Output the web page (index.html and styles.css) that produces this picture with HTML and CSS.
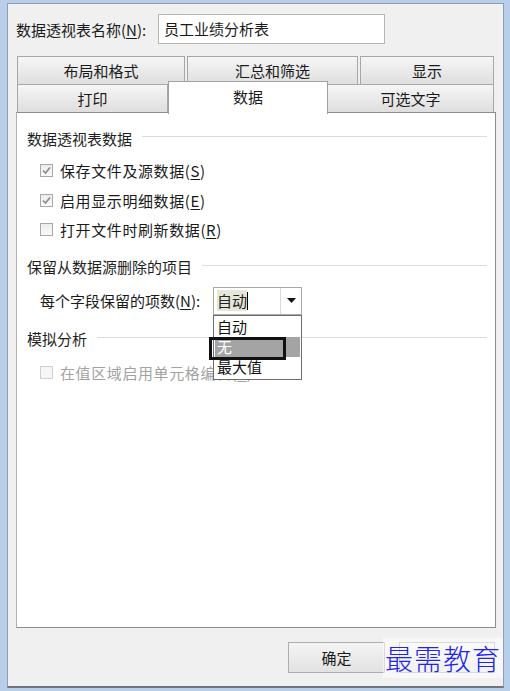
FILE: index.html
```html
<!DOCTYPE html>
<html>
<head>
<meta charset="utf-8">
<link rel="stylesheet" href="styles.css">
</head>
<body>
<div class="dialog">
  <div class="name-row">
    <label class="name-label">数据透视表名称(<u>N</u>):</label>
    <div class="name-input">员工业绩分析表</div>
  </div>

  <div class="tabs">
    <div class="tab-row row1">
      <div class="tab t-layout">布局和格式</div>
      <div class="tab t-sum">汇总和筛选</div>
      <div class="tab t-show">显示</div>
    </div>
    <div class="tab-row row2">
      <div class="tab t-print">打印</div>
      <div class="tab t-data active">数据</div>
      <div class="tab t-alt">可选文字</div>
    </div>
  </div>

  <div class="panel">
    <div class="group-head"><span>数据透视表数据</span><i></i></div>
    <div class="check-row"><span class="box checked"><svg viewBox="0 0 13 13" width="13" height="13"><path d="M3 6.5 L5.5 9 L10 3.5" fill="none" stroke="#8a8a8a" stroke-width="1.6"/></svg></span><span class="wide">保存文件及源数据(<u>S</u>)</span></div>
    <div class="check-row"><span class="box checked"><svg viewBox="0 0 13 13" width="13" height="13"><path d="M3 6.5 L5.5 9 L10 3.5" fill="none" stroke="#8a8a8a" stroke-width="1.6"/></svg></span><span class="wide">启用显示明细数据(<u>E</u>)</span></div>
    <div class="check-row"><span class="box"></span><span class="wide">打开文件时刷新数据(<u>R</u>)</span></div>

    <div class="group-head g2"><span>保留从数据源删除的项目</span><i></i></div>
    <div class="combo-row">
      <span class="combo-label">每个字段保留的项数(<u>N</u>):</span>
      <div class="combo">
        <div class="combo-text"><span class="sel">自动</span><span class="caret"></span></div>
        <div class="combo-btn"><svg width="9" height="5" viewBox="0 0 9 5"><path d="M0 0 H9 L4.5 5 Z" fill="#111"/></svg></div>
        <div class="combo-list">
          <div class="opt">自动</div>
          <div class="opt hl">无</div>
          <div class="opt">最大值</div>
        </div>
        <div class="mark"></div>
      </div>
    </div>

    <div class="group-head g3"><span>模拟分析</span><i></i></div>
    <div class="check-row disabled"><span class="box"></span><span class="wide">在值区域启用单元格编辑(<u>E</u>)</span></div>
  </div>

  <div class="footer">
    <div class="btn ok">确定</div>
    <div class="btn cancel"></div>
    <div class="watermark">最需教育</div>
  </div>
</div>
</body>
</html>
```

FILE: styles.css
```css
html, body {
  margin: 0;
  padding: 0;
}
body {
  width: 510px;
  height: 691px;
  box-sizing: border-box;
  background: #b9cfe9;
  padding: 3px 6px 3px 7px;
  font-family: "Noto Sans CJK SC", "Liberation Sans", sans-serif;
  font-size: 15px;
  color: #1a1a1a;
}
.dialog {
  height: 100%;
  box-sizing: border-box;
  background: #f0f0f0;
  border: 1px solid #8f9fb3;
  border-bottom: 2px solid #6f7680;
  padding: 9px 7px 0 8px;
  display: flex;
  flex-direction: column;
}
u { text-decoration: underline; text-underline-offset: 2px; }

.name-row {
  display: flex;
  align-items: center;
  height: 32px;
}
.name-label {
  width: 142px;
  white-space: nowrap;
}
.name-input {
  width: 227px;
  height: 30px;
  box-sizing: border-box;
  background: #fff;
  border: 1px solid #b5b5b5;
  padding: 0 0 0 5px;
  line-height: 28px;
}

.tabs {
  margin-top: 11px;
  margin-left: 1px;
  width: 477px;
}
.tab-row {
  display: flex;
  height: 29px;
  position: relative;
}
.row1 { gap: 2px; }
.row2 { margin-top: -1px; }
.tab {
  box-sizing: border-box;
  border: 1px solid #a7a7a7;
  border-bottom: none;
  background: linear-gradient(#f6f6f6, #dedede);
  text-align: center;
  line-height: 28px;
  font-size: 15px;
}
.t-layout { width: 168px; }
.t-sum { width: 171px; }
.t-show { width: 134px; }
.t-print { width: 151px; border-bottom: 1px solid #a7a7a7; }
.t-data { width: 160px; }
.t-alt { width: 166px; border-bottom: 1px solid #a7a7a7; border-left: none; }
.t-data.active {
  background: #fff;
  margin-top: -3px;
  height: 33px;
  line-height: 30px;
  position: relative;
  z-index: 2;
  border-color: #a0a0a0;
}

.panel {
  margin-top: -1px;
  width: 480px;
  height: 516px;
  box-sizing: border-box;
  background: #fff;
  border: 1px solid #8c8c8c;
  border-left-color: #b0b0b0;
  padding: 14px 8px 0 10px;
  position: relative;
  z-index: 1;
}
.group-head {
  display: flex;
  align-items: center;
  height: 22px;
  color: #1e1e1e;
}
.group-head i {
  flex: 1;
  height: 1px;
  background: #dcdcdc;
  margin-left: 10px;
  margin-top: -3px;
}
.check-row {
  display: flex;
  align-items: center;
  height: 29.5px;
  padding-left: 13px;
  gap: 7px;
}
.wide { letter-spacing: 0.6px; }
.group-head + .check-row { margin-top: 7px; }
.box {
  width: 13px;
  height: 13px;
  box-sizing: border-box;
  border: 1px solid #a8a8a8;
  background: linear-gradient(#ececec, #fafafa);
  display: inline-flex;
}
.box svg { margin: -1px; }
.disabled { color: #a2a2a2; }
.disabled .box { border-color: #cfcfcf; background: #f6f6f6; }

.g2 { margin-top: 11px; }
.combo-row {
  display: flex;
  align-items: center;
  margin-top: 8px;
  padding-left: 13px;
  height: 30px;
}
.combo-label { width: 173px; white-space: nowrap; }
.combo {
  position: relative;
  width: 89px;
  height: 28px;
  box-sizing: border-box;
  border: 1px solid #a9a9a9;
  background: #fff;
  display: flex;
}
.combo-text {
  flex: 1;
  display: flex;
  align-items: center;
  padding-left: 3px;
}
.sel { background: #e6e6d8; color: #222; }
.caret { width: 1px; height: 18px; background: #000; }
.combo-btn {
  width: 20px;
  border-left: 1px solid #d9d9d9;
  display: flex;
  align-items: center;
  justify-content: center;
}
.combo-list {
  position: absolute;
  left: -1px;
  top: 27px;
  width: 89px;
  box-sizing: border-box;
  border: 1px solid #6d6d6d;
  background: #fff;
  padding: 1px 1px 2px 1px;
  z-index: 5;
}
.opt {
  height: 20px;
  line-height: 20px;
  padding-left: 2px;
  color: #111;
}
.opt.hl { background: #a4a4a4; color: #fff; }
.mark {
  position: absolute;
  left: -5px;
  top: 49px;
  width: 77px;
  height: 23px;
  box-sizing: border-box;
  border: 3px solid #111;
  z-index: 6;
}
.g3 { margin-top: 12px; }
.g3 + .check-row { margin-top: 8px; }

.footer {
  position: relative;
  display: flex;
  justify-content: flex-end;
  gap: 14px;
  padding: 14px 0 0 0;
  margin-right: 1px;
}
.btn {
  width: 97px;
  height: 31px;
  box-sizing: border-box;
  border: 1px solid #adadad;
  background: linear-gradient(#f4f4f4, #e2e2e2);
  text-align: center;
  line-height: 29px;
  font-size: 15px;
}
.cancel { width: 96px; }
.watermark {
  position: absolute;
  right: -8px;
  top: 10px;
  font-family: "Noto Sans CJK SC", serif;
  font-weight: 300;
  font-size: 28px;
  letter-spacing: 1px;
  color: #1f24f0;
  background: rgba(255,255,255,0.55);
  line-height: 40px;
  padding: 0 2px;
}
```
